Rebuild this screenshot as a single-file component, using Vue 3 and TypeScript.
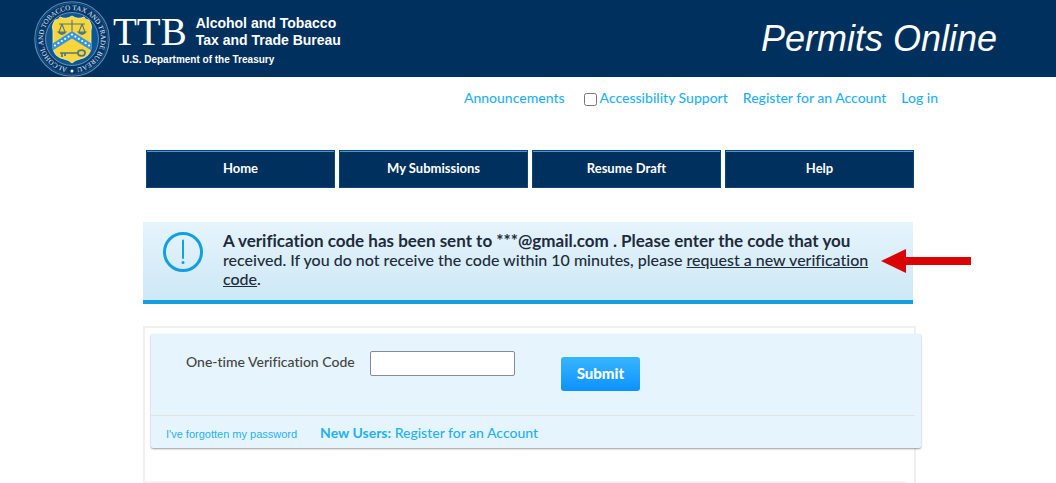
<script setup lang="ts">
import { ref } from 'vue'

const tabs: string[] = ['Home', 'My Submissions', 'Resume Draft', 'Help']
const accessibility = ref(false)
const code = ref('')
const stars: number[][] = [
  [22, 45.5], [25.4, 43.2], [28.8, 41], [32.2, 38.8], [35.6, 36.6], [39, 34.6],
  [42.4, 36.6], [45.8, 38.8], [49.2, 41], [52.6, 43.2], [56, 45.5],
]
</script>

<template>
  <header class="banner">
    <div class="brand">
      <svg class="seal" viewBox="0 0 78 78" role="img" aria-label="Bureau seal">
        <circle cx="39" cy="39" r="37.2" fill="#073769" stroke="#5590bd" stroke-width="1.1" />
        <circle cx="39" cy="39" r="35.6" fill="none" stroke="#3c76a6" stroke-width="0.5" />
        <circle cx="39" cy="39" r="26.5" fill="#11558f" stroke="#72a9cf" stroke-width="0.8" />
        <path id="ring" d="M 37.5 67.96 A 29 29 0 1 1 40.5 67.96" fill="none" />
        <text class="seal-text"><textPath href="#ring" startOffset="50%" text-anchor="middle">ALCOHOL AND TOBACCO TAX AND TRADE BUREAU</textPath></text>
        <circle cx="39" cy="71" r="1.5" fill="#e8f3fa" />
        <path d="M22 20 Q26 20 27 17 Q33 20 39 16 Q45 20 51 17 Q52 20 56 20 Q60 26 58 31 L58 48 Q57 57 47 59 Q42 60 39 63 Q36 60 31 59 Q21 57 20 48 L20 31 Q18 26 22 20 Z" fill="#fbd53a" stroke="#eaf1d2" stroke-width="0.8" />
        <g fill="none" stroke="#4a7a86" stroke-width="1.1">
          <path d="M26 24 H52 M39 20 V31 M29 24 L26 32 M29 24 L32 32 M49 24 L46 32 M49 24 L52 32" />
          <path d="M25 32 Q29 37 33 32 Z M45 32 Q49 37 53 32 Z" fill="#4a7a86" />
        </g>
        <path d="M19.6 43.5 L39 31 L58.4 43.5 V50.5 L39 38.5 L19.6 50.5 Z" fill="#3795df" />
        <g fill="#eef9ff">
          <circle v-for="([x, y], i) in stars" :key="i" :cx="x" :cy="y" r="1.1" />
        </g>
        <g fill="none" stroke="#4a7a86" stroke-width="1.7">
          <ellipse cx="48.5" cy="53" rx="3.6" ry="2.8" />
          <path d="M45 53 H27 M29 53 V57 M32 53 V56" />
        </g>
      </svg>
      <div class="brand-text">
        <div class="brand-top">
          <span class="ttb">TTB</span>
          <span class="bureau">Alcohol and Tobacco<br />Tax and Trade Bureau</span>
        </div>
        <span class="dept">U.S. Department of the Treasury</span>
      </div>
    </div>
    <h1 class="title">Permits Online</h1>
  </header>

  <div class="page">
    <nav class="utility" aria-label="Account">
      <a href="#announcements">Announcements</a>
      <label class="access">
        <input v-model="accessibility" type="checkbox" />
        <span>Accessibility Support</span>
      </label>
      <a href="#register">Register for an Account</a>
      <a href="#login">Log in</a>
    </nav>

    <nav class="tabs" aria-label="Main">
      <a v-for="tab in tabs" :key="tab" href="#" class="tab">{{ tab }}</a>
    </nav>

    <main>
      <section class="notice" role="status">
        <svg class="notice-icon" viewBox="0 0 40 40" aria-hidden="true">
          <circle cx="20" cy="20" r="18.5" fill="none" stroke="#149fe0" stroke-width="3" />
          <path d="M20 8.5 V26" stroke="#149fe0" stroke-width="2" stroke-linecap="round" />
          <circle cx="20" cy="30.5" r="1.5" fill="#149fe0" />
        </svg>
        <p class="notice-text">
          <strong>A verification code has been sent to ***@gmail.com . Please enter the code that you</strong>
          received. If you do not receive the code within 10 minutes, please
          <a href="#resend">request a new verification code</a>.
        </p>
        <svg class="pointer" viewBox="0 0 90 24" aria-hidden="true">
          <path d="M0 12 L25 0 V8 H90 V16 H25 V24 Z" fill="#d90404" />
        </svg>
      </section>

      <section class="panel">
        <form class="card" @submit.prevent>
          <div class="entry">
            <label for="otp">One-time Verification Code</label>
            <input id="otp" v-model="code" type="text" autocomplete="one-time-code" />
            <button type="submit">Submit</button>
          </div>
          <div class="links">
            <a class="forgot" href="#password">I've forgotten my password</a>
            <a class="new-user" href="#register"><b>New Users:</b> Register for an Account</a>
          </div>
        </form>
        <div class="panel-next"></div>
      </section>
    </main>
  </div>
</template>

<style>
body {
  margin: 0;
  background: #fff;
  overflow-x: hidden;
}
</style>

<style scoped>
.banner {
  display: flex;
  justify-content: space-between;
  height: 77px;
  padding: 0 59px 0 33px;
  background: #00305e;
  color: #fff;
  font-family: "Liberation Sans", Arial, sans-serif;
  overflow: hidden;
}
.brand {
  display: flex;
}
.seal {
  width: 78px;
  height: 78px;
  flex: none;
}
.seal-text {
  font: 7px "Liberation Serif", serif;
  fill: #e0f0fa;
}
.brand-text {
  padding: 15px 0 0 2px;
}
.brand-top {
  display: flex;
  gap: 9px;
  height: 38px;
}
.ttb {
  font: 39px/34px "Liberation Serif", "Times New Roman", serif;
}
.bureau {
  font-size: 14px;
  line-height: 17px;
  font-weight: 700;
}
.dept {
  display: block;
  padding-left: 9px;
  font-size: 10px;
  line-height: 14px;
  font-weight: 700;
}
.title {
  margin: 0;
  font-size: 36px;
  font-style: italic;
  font-weight: 400;
  line-height: 78px;
}
.page {
  max-width: 770px;
  margin: 0 auto;
  font-family: Lato, "Open Sans", sans-serif;
  font-variant-ligatures: none;
}
a {
  color: #1fb0fc;
  text-decoration: none;
}
.utility {
  display: flex;
  justify-content: flex-end;
  align-items: center;
  gap: 15px;
  margin-right: -25px;
  padding-top: 11px;
  font-size: 14px;
  line-height: 20px;
  font-weight: 500;
  color: #1fb0fc;
  white-space: nowrap;
}
.access {
  display: flex;
  align-items: center;
  gap: 3px;
  margin-left: 4px;
}
.access input {
  width: 13px;
  height: 13px;
  margin: 2px 0 0;
}
.tabs {
  display: grid;
  grid-template-columns: repeat(4, 1fr);
  gap: 4px;
  margin: 42px -1px 0 3px;
}
.tab {
  box-sizing: border-box;
  height: 38px;
  border: 1px solid #0b4678;
  background: #00305e;
  box-shadow: inset 0 1px #4d94d8;
  color: #fff;
  font-size: 13px;
  line-height: 35px;
  font-weight: 700;
  text-align: center;
}
.notice {
  position: relative;
  display: flex;
  gap: 20px;
  margin-top: 34px;
  padding: 9px 16px 12px 20px;
  border-bottom: 4px solid #149fe0;
  background: linear-gradient(#e6f4fc, #cde8f6);
}
.notice-icon {
  width: 40px;
  height: 40px;
  margin-top: 1px;
  flex: none;
}
.notice-text {
  margin: 0;
  color: #1e2b3c;
  font-size: 16px;
  line-height: 19px;
  font-weight: 500;
}
.notice-text strong {
  display: block;
  font-size: 17px;
  font-weight: 700;
}
.notice-text a {
  color: inherit;
  text-decoration: underline;
}
.pointer {
  position: absolute;
  top: 27px;
  right: -58px;
  width: 90px;
  height: 24px;
}
.panel {
  margin: 22px -3px 0 0;
  border: 2px solid #f0f0f0;
  border-bottom: 0;
}
.card {
  margin: 6px -7px 0 6px;
  background: #e6f5fd;
  border-radius: 2px;
  box-shadow: 0 1px 2px rgba(0, 0, 0, 0.4);
}
.entry {
  display: flex;
  align-items: flex-start;
  height: 64px;
  padding: 17px 35px 0;
  color: #444;
  font-size: 14px;
  font-weight: 500;
}
.entry label {
  line-height: 22px;
}
.entry input {
  box-sizing: border-box;
  width: 145px;
  height: 25px;
  margin-left: 15px;
  border: 1px solid #858c94;
  border-radius: 2px;
  background: #fff;
  font: inherit;
}
.entry button {
  height: 34px;
  margin: 6px 0 0 46px;
  padding: 0 16px 2px;
  border: 0;
  border-radius: 3px;
  background: linear-gradient(#38b5ff, #0c92ff);
  color: #fff;
  font: 900 15px/32px Lato, sans-serif;
}
.links {
  display: flex;
  align-items: baseline;
  gap: 23px;
  margin-right: 6px;
  padding: 7px 15px 4px;
  border-top: 1px solid #e1e3e3;
  font-size: 14px;
  line-height: 19px;
}
.forgot {
  font-family: "Liberation Sans", Arial, sans-serif;
  font-size: 11px;
}
.new-user {
  font-weight: 500;
}
.panel-next {
  height: 4px;
  margin: 33px 8px 0 0;
  background: #f4f4f4;
}
</style>
